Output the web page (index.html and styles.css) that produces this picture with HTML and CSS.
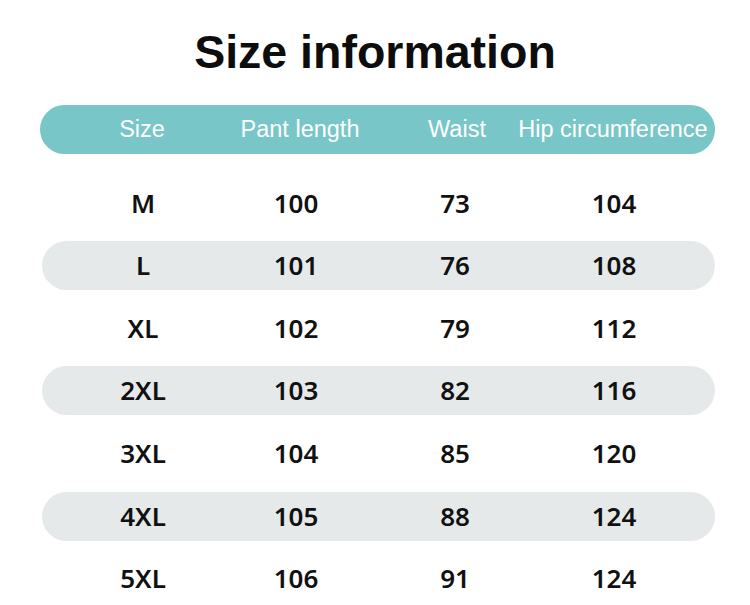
FILE: index.html
```html
<!DOCTYPE html>
<html lang="en">
<head>
<meta charset="utf-8">
<title>Size information</title>
<link rel="stylesheet" href="styles.css">
</head>
<body>
<h1 class="title">Size information</h1>
<div class="table">
  <div class="row head">
    <div class="cell">Size</div>
    <div class="cell">Pant length</div>
    <div class="cell">Waist</div>
    <div class="cell">Hip circumference</div>
  </div>
  <div class="body">
    <div class="row"><div class="cell">M</div><div class="cell">100</div><div class="cell">73</div><div class="cell">104</div></div>
    <div class="row alt"><div class="cell">L</div><div class="cell">101</div><div class="cell">76</div><div class="cell">108</div></div>
    <div class="row"><div class="cell">XL</div><div class="cell">102</div><div class="cell">79</div><div class="cell">112</div></div>
    <div class="row alt"><div class="cell">2XL</div><div class="cell">103</div><div class="cell">82</div><div class="cell">116</div></div>
    <div class="row"><div class="cell">3XL</div><div class="cell">104</div><div class="cell">85</div><div class="cell">120</div></div>
    <div class="row alt"><div class="cell">4XL</div><div class="cell">105</div><div class="cell">88</div><div class="cell">124</div></div>
    <div class="row"><div class="cell">5XL</div><div class="cell">106</div><div class="cell">91</div><div class="cell">124</div></div>
  </div>
</div>
</body>
</html>
```
FILE: styles.css
```css
html, body {
  margin: 0;
  padding: 0;
  background: #ffffff;
}
body {
  width: 750px;
  height: 605px;
  overflow: hidden;
}
.title {
  margin: 0;
  padding-top: 29px;
  height: 46px;
  line-height: 46px;
  text-align: center;
  font-family: "Liberation Sans", Arial, sans-serif;
  font-weight: 700;
  font-size: 46.5px;
  color: #0d0d0d;
}
.table {
  margin-top: 30px;
  margin-left: 40px;
  width: 675px;
}
.row {
  display: grid;
  height: 49px;
  border-radius: 25px;
}
.cell {
  display: flex;
  justify-content: center;
  align-items: center;
  white-space: nowrap;
}
.head {
  grid-template-columns: 204px 112px 202px 110px 1fr;
  background: #78c6c7;
  font-family: "Liberation Sans", Arial, sans-serif;
  font-size: 23.5px;
  line-height: 49px;
  color: #ffffff;
}
.body {
  margin-top: 24.5px;
  display: flex;
  flex-direction: column;
  gap: 13.67px;
}
.body .row {
  margin-left: 2px;
  grid-template-columns: 202px 104px 214px 104px 1fr;
  font-family: "Noto Sans", "Open Sans", sans-serif;
  font-weight: 560;
  font-size: 26px;
  line-height: 49px;
  color: #111111;
}
.alt {
  background: #e6e9ea;
}
```
